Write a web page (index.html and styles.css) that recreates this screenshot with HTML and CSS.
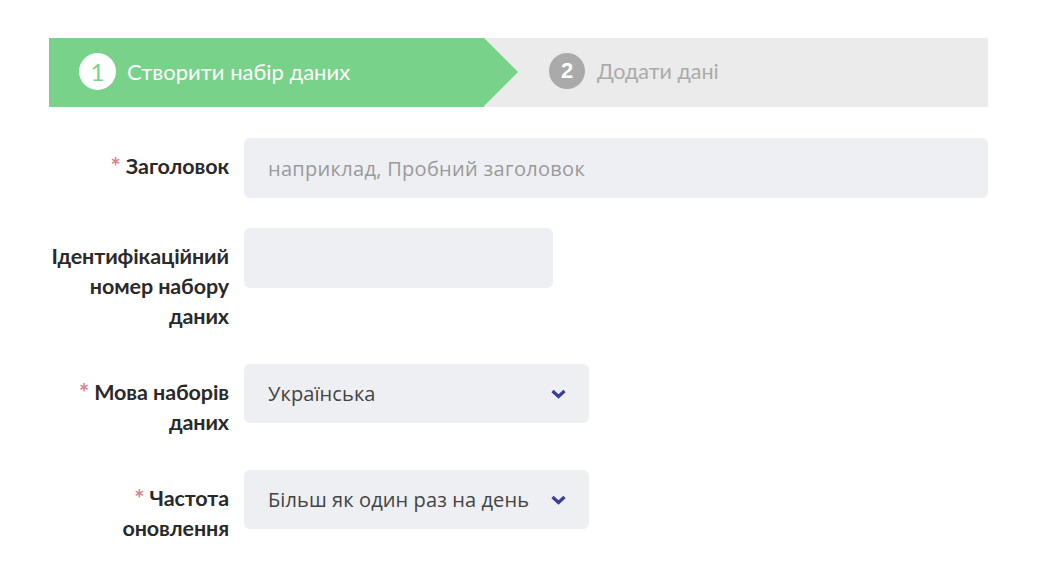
FILE: index.html
```html
<!DOCTYPE html>
<html lang="uk">
<head>
<meta charset="utf-8">
<title>Створити набір даних</title>
<link rel="stylesheet" href="styles.css">
</head>
<body>
<div class="page">
  <div class="steps">
    <div class="step step-active">
      <span class="step-num">1</span>
      <span class="step-label">Створити набір даних</span>
    </div>
    <div class="step step-next">
      <span class="step-num">2</span>
      <span class="step-label">Додати дані</span>
    </div>
  </div>

  <form class="form">
    <div class="row">
      <label class="label"><span class="req">*</span> Заголовок</label>
      <div class="field field-full">
        <input class="input" type="text" placeholder="наприклад, Пробний заголовок">
      </div>
    </div>
    <div class="row">
      <label class="label">Ідентифікаційний номер набору даних</label>
      <div class="field field-short">
        <input class="input" type="text">
      </div>
    </div>
    <div class="row">
      <label class="label"><span class="req">*</span> Мова наборів даних</label>
      <div class="field field-select">
        <div class="select">
          <span class="select-value">Українська</span>
          <svg class="chev" width="15" height="10" viewBox="0 0 15 10"><path d="M1.5 2 L7.5 7.5 L13.5 2" fill="none" stroke="#393e9c" stroke-width="3.2"/></svg>
        </div>
      </div>
    </div>
    <div class="row">
      <label class="label"><span class="req">*</span> Частота оновлення</label>
      <div class="field field-select">
        <div class="select">
          <span class="select-value">Більш як один раз на день</span>
          <svg class="chev" width="15" height="10" viewBox="0 0 15 10"><path d="M1.5 2 L7.5 7.5 L13.5 2" fill="none" stroke="#393e9c" stroke-width="3.2"/></svg>
        </div>
      </div>
    </div>
  </form>
</div>
</body>
</html>
```
FILE: styles.css
```css
* { box-sizing: border-box; }
html, body { margin: 0; padding: 0; background: #fff; }
body { font-family: "Lato", "Open Sans", sans-serif; color: #333; }

.page { padding: 38px 52px 0 49px; width: 1040px; }

.steps {
  display: flex;
  height: 69px;
  background: #ebebeb;
  width: 939px;
}
.step {
  display: flex;
  align-items: center;
  height: 100%;
  padding-bottom: 3px;
}
.step-active {
  position: relative;
  background: #79d289;
  width: 435px;
  padding-left: 30px;
  color: #fff;
}
.step-active::after {
  content: "";
  position: absolute;
  top: 0;
  left: 100%;
  border-top: 34.5px solid transparent;
  border-bottom: 34.5px solid transparent;
  border-left: 34px solid #79d289;
}
.step-next {
  padding-left: 65px;
  color: #aaa;
}
.step-num {
  width: 37px;
  height: 37px;
  border-radius: 50%;
  display: flex;
  align-items: center;
  justify-content: center;
  font-size: 24px;
  margin-right: 11px;
}
.step-active .step-num { background: #fff; color: #79d289; }
.step-next .step-num { background: #aaa; color: #fff; font-family: "Liberation Sans", sans-serif; font-weight: 700; font-size: 22px; width: 36px; height: 36px; margin-right: 12px; }
.step-label { font-size: 22px; }
.step-next .step-label { font-size: 21.5px; }

.form { margin-top: 31px; width: 939px; }
.row {
  display: flex;
  align-items: flex-start;
  margin-bottom: 30px;
}
.label {
  width: 180px;
  flex: none;
  text-align: right;
  font-weight: 700;
  font-size: 21.5px;
  line-height: 30px;
  padding-top: 13px;
  padding-bottom: 3px;
  color: #2a2a2a;
  letter-spacing: -0.1px;
}
.req {
  color: #d6838f;
  font-weight: 700;
  font-size: 24px;
  line-height: 0;
  vertical-align: -2px;
}
.field { margin-left: 15px; }
.field-full { flex: 1; }
.field-short { width: 309px; }
.field-select { width: 345px; }

.input {
  display: block;
  width: 100%;
  height: 60px;
  border: none;
  border-radius: 6px;
  background: #eeeff2;
  padding: 0 24px;
  font-family: "Open Sans", sans-serif;
  font-size: 20px;
  letter-spacing: 0.3px;
  color: #444;
  outline: none;
}
.input::placeholder { color: #9a9a9a; }

.select {
  height: 59px;
  border-radius: 6px;
  background: #eeeff2;
  display: flex;
  align-items: center;
  justify-content: space-between;
  padding: 0 23px 0 24px;
  font-family: "Open Sans", sans-serif;
  font-size: 20px;
  letter-spacing: 0.1px;
  color: #444;
}
.chev { display: block; }
```
